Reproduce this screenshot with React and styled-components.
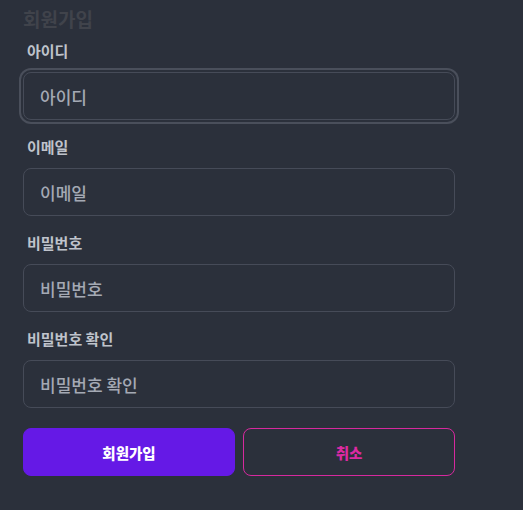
import React from "react";
import styled, { createGlobalStyle } from "styled-components";

const Global = createGlobalStyle`
  html, body { margin: 0; padding: 0; background: #2b303b; }
  body { font-family: "Noto Sans CJK KR", "Noto Sans", sans-serif; }
  * { box-sizing: border-box; }
`;

const Form = styled.form`
  width: 523px;
  min-height: 510px;
  padding: 5px 68px 0 23px;
  display: flex;
  flex-direction: column;
`;

const Title = styled.h2`
  margin: 0 0 8px;
  font-size: 19px;
  line-height: 28px;
  font-weight: 700;
  color: #40434b;
`;

const Fields = styled.div`
  display: flex;
  flex-direction: column;
  gap: 17px;
`;

const Field = styled.div`
  display: flex;
  flex-direction: column;
  gap: 11px;
`;

const Label = styled.label`
  padding-left: 4px;
  font-size: 15px;
  line-height: 20px;
  font-weight: 600;
  color: #bfc3cb;
`;

const Input = styled.input`
  width: 100%;
  height: 48px;
  padding: 0 16px;
  border: 1px solid #464b58;
  border-radius: 8px;
  background: #2b303b;
  font-family: inherit;
  font-size: 17px;
  font-weight: 500;
  color: #e5e7eb;
  outline: none;
  box-shadow: ${(p) => (p.$focused ? "0 0 0 2px #2b303b, 0 0 0 4px #4a4f5b" : "none")};
  &::placeholder { color: #a4a9b4; }
`;

const Actions = styled.div`
  display: grid;
  grid-template-columns: 1fr 1fr;
  gap: 8px;
  margin-top: 20px;
`;

const Button = styled.button`
  height: 48px;
  border-radius: 8px;
  font-family: inherit;
  font-size: 14.5px;
  font-weight: 800;
  cursor: pointer;
  border: 1px solid ${(p) => (p.$variant === "primary" ? "#6519e6" : "#d6299e")};
  background: ${(p) => (p.$variant === "primary" ? "#6519e6" : "transparent")};
  color: ${(p) => (p.$variant === "primary" ? "#ffffff" : "#dc2aa2")};
`;

const fields = [
  { id: "username", label: "아이디", type: "text", focused: true },
  { id: "email", label: "이메일", type: "email" },
  { id: "password", label: "비밀번호", type: "password" },
  { id: "confirm", label: "비밀번호 확인", type: "password" },
];

export default function App() {
  return (
    <>
      <Global />
      <Form onSubmit={(e) => e.preventDefault()}>
        <Title>회원가입</Title>
        <Fields>
          {fields.map((f) => (
            <Field key={f.id}>
              <Label htmlFor={f.id}>{f.label}</Label>
              <Input id={f.id} type={f.type} placeholder={f.label} $focused={f.focused} />
            </Field>
          ))}
        </Fields>
        <Actions>
          <Button type="submit" $variant="primary">회원가입</Button>
          <Button type="button" $variant="secondary">취소</Button>
        </Actions>
      </Form>
    </>
  );
}
